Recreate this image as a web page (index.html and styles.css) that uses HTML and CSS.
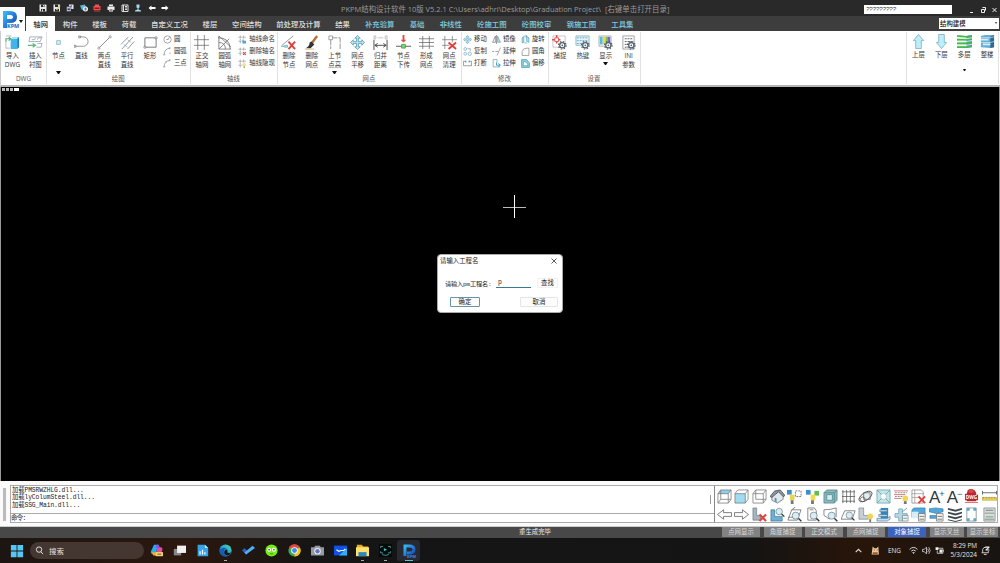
FILE: index.html
```html
<!DOCTYPE html>
<html lang="en">
<head>
    <meta charset="UTF-8">
    <meta name="viewport" content="width=device-width, initial-scale=1.0">
    <title>PKPM</title>
    <link rel="stylesheet" href="styles.css">
</head>
<body>
    <svg class="sprite">
        <defs>
            <linearGradient id="gBlue" x1="0" y1="0" x2="1" y2="1"><stop offset="0" stop-color="#35b4f5"/><stop offset="1" stop-color="#1641b8"/></linearGradient>
            <linearGradient id="gEdge" x1="1" y1="0" x2="0" y2="1"><stop offset="0" stop-color="#5fe08c"/><stop offset=".45" stop-color="#22a9dc"/><stop offset="1" stop-color="#1264c4"/></linearGradient>
        </defs>
        <!-- title bar -->
        <symbol id="save" viewBox="0 0 16 16"><path fill="#e8e8e8" d="M1 1h13l1 1v13H1z"/><path fill="#2a2a2a" d="M4 1h7v5H4zM4 10h8v5H4z"/><path fill="#e8e8e8" d="M8 2h2v3H8zM6 11h2v4H6z"/></symbol>
        <symbol id="saveas" viewBox="0 0 16 16"><path fill="#e8e8e8" d="M1 1h13v14H1z"/><path fill="#2a2a2a" d="M4 1h6v5H4zM4 10h8v5H4z"/><path stroke="#e3c37c" stroke-width="2.5" d="M7 12l7-9"/></symbol>
        <symbol id="copies" viewBox="0 0 16 16"><path fill="#e8e8e8" d="M6 1h9v9H6z"/><path fill="#b9bfd8" stroke="#2a2a2a" d="M1 5h9v10H1z"/><path fill="#33406b" d="M3 9h5v3H3zM9 3h3v2H9z"/></symbol>
        <symbol id="globe" viewBox="0 0 16 16"><path fill="#57b5d8" d="M0 3l9-2 4 5-4 7-6-2z"/><circle cx="11" cy="10" r="5" fill="#eee"/><path stroke="#28739b" stroke-width="1.5" fill="none" d="M8 10h6M11 7v6"/></symbol>
        <symbol id="redbox" viewBox="0 0 16 16"><path fill="#ef5258" d="M4 1h8v3h3v8H1V4h3z"/><path fill="#8c171c" d="M3 7h10v3H3z"/><path fill="#d33a40" d="M2 13h12v2H2z"/></symbol>
        <symbol id="print" viewBox="0 0 16 16"><path fill="#eee" d="M4 1h8v4h3v7h-3v3H4v-3H1V5h3z"/><path fill="#333" d="M4 5h8v1H4zM5 10h6v1H5zM5 12h6v1H5z"/></symbol>
        <symbol id="sheet" viewBox="0 0 16 16"><path fill="none" stroke="#ddd" stroke-width="2" d="M2 2h12v13H2z"/><path stroke="#ddd" stroke-width="2" d="M5 2v13M8 5h4M8 8h4M8 11h4"/></symbol>
        <symbol id="user" viewBox="0 0 16 16"><path fill="#a8dceb" d="M5 1h6v6l-2 1v3l5 2v2H2v-2l5-2V8L5 7z"/></symbol>
        <symbol id="back" viewBox="0 0 16 16"><path fill="#fff" d="M1 8l6-5v3h8v4H7v3z"/></symbol>
        <symbol id="fwd" viewBox="0 0 16 16"><path fill="#fff" d="M15 8L9 3v3H1v4h8v3z"/></symbol>
        <!-- ribbon -->
        <symbol id="import" viewBox="0 0 16 16"><path fill="#42b3ec" d="M6 4h7v11H6z"/><path fill="#a9dcf5" d="M6 4l2-2h7l-2 2z"/><path fill="#1879b5" d="M13 4l2-2v11l-2 2z"/><path fill="none" stroke="#999" stroke-width=".7" d="M1 1h6M1 14h4M1 6v8"/><path fill="none" stroke="#4dae6b" stroke-width="1.2" d="M1 7V4h4M4 2l2 2-2 2"/></symbol>
        <symbol id="insert" viewBox="0 0 16 16"><path fill="none" stroke="#8c9eaa" stroke-width=".8" d="M2 2h13l-2 5H1zM4 5h3l1-2M10 5l1-2h3M9 13h5l1-4h-5"/><path fill="none" stroke="#64b878" stroke-width="1.3" d="M0 11h7M5 9l3 2-3 2"/></symbol>
        <symbol id="node" viewBox="0 0 16 16"><path fill="#d6f0f4" stroke="#74b6bd" stroke-width=".8" d="M6 6h4v4H6z"/></symbol>
        <symbol id="pline" viewBox="0 0 16 16"><path fill="none" stroke="#777" stroke-width=".8" d="M6 2h4a4.800 4.800 0 0 1 0 10H2"/><path fill="#cde6eb" stroke="#666" stroke-width=".6" d="M0 11h2v2H0zM5 1h2v2H5z"/></symbol>
        <symbol id="line2" viewBox="0 0 16 16"><path stroke="#666" stroke-width=".8" d="M2 14L14 2"/><circle cx="14" cy="2" r="1.200" fill="#fff" stroke="#666" stroke-width=".6"/><circle cx="2" cy="14" r="1.200" fill="#fff" stroke="#666" stroke-width=".6"/></symbol>
        <symbol id="para" viewBox="0 0 16 16"><path stroke="#777" stroke-width=".8" d="M1 10L9 2M2 15L14 2M8 15l7-8"/><path stroke="#71adb8" stroke-width=".7" d="M4 10l4 3M8 5l4 3"/></symbol>
        <symbol id="rect" viewBox="0 0 16 16"><path fill="none" stroke="#666" stroke-width=".9" d="M2 3h12v10H2z"/><path fill="#fff" stroke="#666" stroke-width=".6" d="M13 2h2v2h-2zM1 12h2v2H1z"/></symbol>
        <symbol id="circ" viewBox="0 0 16 16"><circle cx="8" cy="8" r="6.500" fill="none" stroke="#666"/><path stroke="#666" d="M8 8l4-4M6 8h4"/></symbol>
        <symbol id="arc" viewBox="0 0 16 16"><path fill="none" stroke="#666" d="M2 14Q2 3 13 2"/><path stroke="#777" d="M0 14h4M12 0v4M11 11h3"/></symbol>
        <symbol id="arc3" viewBox="0 0 16 16"><path fill="none" stroke="#666" d="M2 14Q2 4 13 2"/><path stroke="#777" d="M0 14h4M12 0v4M4 5h3"/></symbol>
        <symbol id="grid" viewBox="0 0 16 16"><path fill="none" stroke="#666" stroke-width=".8" d="M4 0v16M11 0v16M0 5h16M0 11h16"/></symbol>
        <symbol id="fan" viewBox="0 0 16 16"><path fill="none" stroke="#666" stroke-width=".8" d="M2 1v14h13M2 15L13 4M1 3Q14 3 14 15M2 8q7 0 7 7M2 1l13 12"/></symbol>
        <symbol id="axname" viewBox="0 0 16 16"><path fill="none" stroke="#777" stroke-dasharray="4 1" d="M4 1v14M10 1v6M1 4h13M1 11h7"/><path fill="none" stroke="#3b9cc5" stroke-width="2" d="M9 8v6h4v-3H9"/></symbol>
        <symbol id="axdel" viewBox="0 0 16 16"><path fill="none" stroke="#777" stroke-dasharray="4 1" d="M4 1v14M10 1v6M1 4h13M1 11h7"/><path stroke="#e04545" stroke-width="2" d="M9 9l5 5M14 9l-5 5"/></symbol>
        <symbol id="axshow" viewBox="0 0 16 16"><path fill="none" stroke="#777" stroke-dasharray="4 1" d="M4 1v14M10 1v6M1 4h13M1 11h7"/><circle cx="11" cy="10" r="3" fill="#f5e273"/><path stroke="#888" stroke-width="2" d="M11 13v3"/></symbol>
        <symbol id="delnode" viewBox="0 0 16 16"><path stroke="#777" stroke-width=".8" d="M1 11L13 1M0 12h4"/><path fill="#c7edf2" stroke="#4cb1bf" stroke-width=".8" d="M4 11h3v2H4z"/><path stroke="#de3f3b" stroke-width="2" d="M8 7l7 8M15 7l-7 8"/></symbol>
        <symbol id="brush" viewBox="0 0 16 16"><path stroke="#b76b35" stroke-width="2.500" d="M14 1L8 9"/><path fill="#333" d="M8 7l3 3-4 4H2q4-2 4-6z"/><path stroke="#d8b86b" d="M1 15h10"/></symbol>
        <symbol id="height" viewBox="0 0 16 16"><path fill="none" stroke="#777" stroke-width=".8" stroke-dasharray="7 1" d="M4 4v11M4 3h10v12"/><path fill="#fff" stroke="#777" stroke-width=".7" d="M2 1h4v4H2z"/></symbol>
        <symbol id="move" viewBox="0 0 16 16"><path fill="#bce2ee" stroke="#4f9ab5" stroke-width=".8" d="M8 .5l3 3H9v3.500h3.500V5l3 3-3 3V9H9v3.500h2l-3 3-3-3h2V9H3.500v2l-3-3 3-3v2H7V3.500H5z"/></symbol>
        <symbol id="dist" viewBox="0 0 16 16"><path fill="none" stroke="#333" stroke-width=".9" d="M1 5v11M15 5v11M2 11h12M5 9l-3 2 3 2M11 9l3 2-3 2"/><path fill="none" stroke="#999" stroke-width=".6" d="M1 1h2v3H1zM13 1h2v3h-2zM5 3h6"/></symbol>
        <symbol id="down" viewBox="0 0 16 16"><path fill="#e44b47" d="M7 0h2v5h2L8 8 5 5h2z"/><path stroke="#555" d="M0 12h16"/><path fill="#75dc75" stroke="#358a3a" stroke-width=".7" d="M6 10h4v4H6z"/></symbol>
        <symbol id="hash" viewBox="0 0 16 16"><path stroke="#666" stroke-width=".8" d="M4 1v14M11 1v14M0 4h16M0 8h16M0 12h16"/></symbol>
        <symbol id="clean" viewBox="0 0 16 16"><path stroke="#777" stroke-width=".8" d="M3 1v14M11 1v7M0 5h16M0 11h8"/><path stroke="#de3f3b" stroke-width="2" d="M7 8l8 7M15 8l-8 7"/></symbol>
        <symbol id="copy" viewBox="0 0 16 16"><g fill="none" stroke="#4995b4"><circle cx="4" cy="3.500" r="2.500"/><circle cx="4" cy="12" r="2.500"/><circle cx="12" cy="12" r="3"/></g><path fill="none" stroke="#777" d="M8 3h5v4"/></symbol>
        <symbol id="break" viewBox="0 0 16 16"><path fill="none" stroke="#555" d="M5 4H1v8h14V4h-4"/><path stroke="#4995b4" stroke-width="2" d="M5 3v3M11 3v3"/></symbol>
        <symbol id="mirror" viewBox="0 0 16 16"><path fill="none" stroke="#555" d="M6 2v11H1zM8 0v16"/><path fill="#b9e2ef" stroke="#438ba5" d="M10 2v11h5z"/></symbol>
        <symbol id="extend" viewBox="0 0 16 16"><path fill="none" stroke="#666" d="M15 1L9 15M0 8h4M6 8h5"/></symbol>
        <symbol id="stretch" viewBox="0 0 16 16"><path fill="none" stroke="#467e96" d="M2 1v13h12M2 1h7v5"/><path fill="none" stroke="#2d94c4" stroke-width="1.500" d="M8 6v5h6M11 8l4 3-4 3"/></symbol>
        <symbol id="rotate" viewBox="0 0 16 16"><path fill="#bce4f0" stroke="#348caf" d="M2 5l3-2v10l-3 1zM10 3l4 2v8l-4-2z"/><path fill="none" stroke="#348caf" d="M5 2h5M8 0l3 2-3 2M6 14h5"/></symbol>
        <symbol id="fillet" viewBox="0 0 16 16"><path fill="none" stroke="#666" d="M2 15V8q1-6 9-6h3v13z"/></symbol>
        <symbol id="offset" viewBox="0 0 16 16"><path fill="#87d7e8" stroke="#337fa0" d="M1 1h9l5 6v8H1z"/><path fill="#fff" stroke="#337fa0" d="M4 5h5l3 4v3H4z"/></symbol>
        <symbol id="gear" viewBox="0 0 16 16"><circle cx="8" cy="8" r="4.500" fill="#fff" stroke="#53616d" stroke-width="2.200"/><circle cx="8" cy="8" r="6.500" fill="none" stroke="#53616d" stroke-width="2" stroke-dasharray="2.550 2.550"/><circle cx="8" cy="8" r="1.500" fill="#53616d"/></symbol>
        <symbol id="snap" viewBox="0 0 16 16"><path fill="none" stroke="#aaa" stroke-width=".7" d="M1 1h13v12H1z"/><path stroke="#dc514c" stroke-width="1.500" d="M5 0v9M0 5h9"/><path fill="#fff" stroke="#dc514c" d="M3 3h4v4H3z"/><use href="#gear" x="6" y="6" width="10" height="10"/></symbol>
        <symbol id="keys" viewBox="0 0 16 16"><path fill="#e5f4fa" stroke="#77a9bd" stroke-width=".8" d="M1 1h14v10H1z"/><path stroke="#66a9c1" stroke-dasharray="2 1" d="M2 3h12M2 6h12M2 9h12"/><use href="#gear" x="6" y="6" width="10" height="10"/></symbol>
        <symbol id="disp" viewBox="0 0 16 16"><path fill="#eee" stroke="#999" stroke-width=".7" d="M1 1h13v11H1z"/><path fill="#4cbfe6" d="M2 2h3v8H2z"/><path fill="#e8db50" d="M5 2h3v8H5z"/><path fill="#82c75b" d="M8 2h2v7H8z"/><path fill="#7864d0" d="M10 2h3v7h-3z"/><use href="#gear" x="6" y="6" width="10" height="10"/></symbol>
        <symbol id="ini" viewBox="0 0 16 16"><path fill="#fff" stroke="#888" stroke-width=".8" d="M2 1h12v14H2z"/><path stroke="#555" stroke-dasharray="2 1" d="M4 4h8M4 7h8M4 10h5M4 13h3"/><use href="#gear" x="6" y="6" width="10" height="10"/></symbol>
        <symbol id="up" viewBox="0 0 16 16"><path fill="#bdeefa" stroke="#75a9b8" stroke-width=".8" d="M8 .5L13.500 7H11v8.500H5V7H2.500z"/></symbol>
        <symbol id="dn" viewBox="0 0 16 16"><path fill="#bdeefa" stroke="#75a9b8" stroke-width=".8" d="M8 15.500L13.500 9H11V.5H5V9H2.500z"/></symbol>
        <symbol id="floors" viewBox="0 0 16 16"><path fill="#c9f0c9" d="M0 1l10 1v13L0 14z"/><path fill="#4b97a3" d="M10 2l6-1v13l-6 1z"/><path stroke="#48b555" stroke-width="1.700" fill="none" d="M0 2l10 1 6-1M0 6h10l6-1M0 10h10l6-1M0 14h10l6-1"/><path stroke="#fff" stroke-width=".8" fill="none" d="M0 4l10 1 6-1M0 8h10l6-1M0 12h10l6-1"/></symbol>
        <symbol id="whole" viewBox="0 0 16 16"><path fill="#64afd9" d="M1 2l4-1h10v13l-4 1-10-1z"/><path fill="#32688f" d="M11 3l4-2v13l-4 1z"/><path fill="#dceef6" d="M1 5h8v2H1zM3 10h8v2H3z"/><path stroke="#fff" stroke-width=".6" fill="none" d="M1 4h10l4-1M1 9h10l4-1"/></symbol>
        <!-- view tools -->
        <symbol id="cubetop" viewBox="0 0 16 16"><path fill="#8fd0ec" d="M1 5l3-4h11l-3 4z"/><path fill="none" stroke="#777" stroke-width=".8" d="M1 5h11v10H1zM1 5l3-4h11v10l-3 4M12 5l3-4M4 1v10h11M1 15l3-4"/></symbol>
        <symbol id="cubefront" viewBox="0 0 16 16"><path fill="#9fdcf2" d="M1 5h11v10H1z"/><path fill="none" stroke="#777" stroke-width=".8" d="M1 5h11v10H1zM1 5l3-4h11v10l-3 4M12 5l3-4"/></symbol>
        <symbol id="cube" viewBox="0 0 16 16"><path fill="none" stroke="#777" stroke-width=".8" d="M1 5h11v10H1zM1 5l3-4h11v10l-3 4M12 5l3-4M4 1v10h11"/></symbol>
        <symbol id="home" viewBox="0 0 16 16"><path fill="#e2e9ec" stroke="#555" stroke-width=".7" d="M2 7v5l6 3 6-4V6L10 2z"/><path fill="#8799a5" stroke="#333" stroke-width=".7" d="M0 8l5-6 6-1 5 6-2 1-5-5-7 6z"/><path fill="#4f91c2" d="M5 9l2 1v4l-2-1z"/></symbol>
        <symbol id="bulbs" viewBox="0 0 16 16"><path fill="#388ed1" d="M0 1h5v5H0z"/><path fill="#e9d54f" d="M3 6h5v6H3z"/><path fill="none" stroke="#555" stroke-width=".8" stroke-dasharray="2 1" d="M9 2h6v6H9z"/><path stroke="#777" stroke-width="3" d="M5.500 12v4"/></symbol>
        <symbol id="bulbg" viewBox="0 0 16 16"><path fill="#388ed1" d="M1 1h5v5H1z"/><path fill="#60bb52" d="M10 2h5v5h-5z"/><path fill="#f0db4d" d="M6 6h5v6H6z"/><path stroke="#777" stroke-width="3" d="M8 12v4"/></symbol>
        <symbol id="frame3d" viewBox="0 0 16 16"><path fill="#8cb9bd" stroke="#4f858c" stroke-width=".8" d="M1 4l3-3h11v11l-3 3H1z"/><path fill="#d8edef" stroke="#4f858c" stroke-width=".8" d="M4 6h6v6H4z"/><path fill="none" stroke="#4f858c" stroke-width=".8" d="M1 4h11v11M12 4l3-3"/></symbol>
        <symbol id="frame" viewBox="0 0 16 16"><path fill="none" stroke="#555" stroke-width=".8" d="M1 3h14M1 8h14M1 13h14M2 1v14M6 1v14M10 1v14M14 1v14"/></symbol>
        <symbol id="orbit" viewBox="0 0 16 16"><path fill="#e2edf1" stroke="#666" stroke-width=".8" d="M6 4h7v7H6z"/><ellipse cx="8" cy="8" rx="8" ry="4" transform="rotate(-35 8 8)" fill="none" stroke="#444" stroke-width=".9"/><circle cx="5" cy="11" r="2.500" fill="none" stroke="#555" stroke-width=".8"/></symbol>
        <symbol id="extent" viewBox="0 0 16 16"><path fill="#c5e6e7" stroke="#66a0a7" stroke-width=".8" d="M1 1h14v14H1z"/><path fill="#fff" stroke="#8ab7bc" stroke-width=".5" d="M5 5h6v6H5z"/><path stroke="#66a0a7" stroke-width=".8" d="M1 1l5 5M15 1l-5 5M1 15l5-5M15 15l-5-5"/></symbol>
        <symbol id="listbulb" viewBox="0 0 16 16"><path stroke="#c86a62" stroke-width=".9" d="M0 2h15M0 6h12M0 10h8"/><path stroke="#777" stroke-width=".9" stroke-dasharray="2 1" d="M1 4h13M1 8h8"/><circle cx="12" cy="10" r="3" fill="#efd655"/><path stroke="#777" stroke-width="3" d="M12 13v3"/></symbol>
        <symbol id="listdel" viewBox="0 0 16 16"><path fill="none" stroke="#888" stroke-width=".8" d="M1 1h10l2 2v12H1z"/><path stroke="#999" stroke-width=".8" d="M1 5h13M1 9h8M4 1v14"/><path stroke="#df4340" stroke-width="2" d="M8 8l7 7M15 8l-7 7"/></symbol>
        <symbol id="ruler" viewBox="0 0 16 16"><path fill="none" stroke="#555" stroke-width=".9" d="M0 4h16M.5 2v4M15.500 2v4"/><path fill="#ead05e" stroke="#c5ac45" stroke-width=".7" d="M0 9h16v3H0z"/><path stroke="#7c6c2c" stroke-dasharray="1 2" d="M1 9.500h15"/></symbol>
        <symbol id="lefta" viewBox="0 0 16 16"><path fill="#fff" stroke="#555" stroke-width=".8" d="M.5 8L7 3v3h8.500v4H7v3z"/></symbol>
        <symbol id="righta" viewBox="0 0 16 16"><path fill="#fff" stroke="#555" stroke-width=".8" d="M15.500 8L9 3v3H.5v4H9v3z"/></symbol>
        <symbol id="ldel" viewBox="0 0 16 16"><path fill="#a5b5c0" stroke="#687983" stroke-width=".7" d="M1 1h4v8h4v5H1z"/><path stroke="#df4340" stroke-width="2.300" d="M8 8l7 7M15 8l-7 7"/></symbol>
        <symbol id="lens" viewBox="0 0 16 16"><path stroke="#333" stroke-width="2" d="M10 10l5 5"/><circle cx="7" cy="7" r="5" fill="#dcecf0" stroke="#5f7d87"/></symbol>
        <symbol id="lzoom" viewBox="0 0 16 16"><path fill="#6eb0d3" stroke="#356d8e" stroke-width=".7" d="M1 3h4v7h8v5H1z"/><use href="#lens" x="5" width="11" height="11"/></symbol>
        <symbol id="zoomw" viewBox="0 0 16 16"><path fill="none" stroke="#666" stroke-width=".8" d="M1 14l4-11h10l-4 11zM1 11h7M5 3l4-3"/><use href="#lens" x="4" y="4" width="12" height="12"/></symbol>
        <symbol id="zooma" viewBox="0 0 16 16"><path fill="none" stroke="#666" stroke-width=".8" d="M3 1h7l2 3v10H3zM5 3h4"/><use href="#lens" x="4" y="4" width="12" height="12"/></symbol>
        <symbol id="zoomp" viewBox="0 0 16 16"><path fill="none" stroke="#666" stroke-width=".8" d="M1 3q7 0 13-2v10M1 3v6l6 4"/><use href="#lens" x="4" y="4" width="12" height="12"/></symbol>
        <symbol id="zoome" viewBox="0 0 16 16"><path fill="none" stroke="#666" stroke-width=".8" d="M0 13L4 4h11l-3 9z"/><use href="#lens" x="4" y="4" width="11" height="11"/></symbol>
        <symbol id="lbulb" viewBox="0 0 16 16"><path fill="#c8d0d4" stroke="#71818b" stroke-width=".7" d="M1 1h5v8h5v4H1z"/><circle cx="13" cy="10" r="3" fill="#efd655"/><path stroke="#777" stroke-width="2" d="M13 13v3"/></symbol>
        <symbol id="column" viewBox="0 0 16 16"><path fill="#2e86c8" d="M5 1h8v12H5z"/><path fill="#bcdff5" stroke="#476678" stroke-width=".6" d="M4 3h8v2H4zM3 8h9v2H3zM1 12h11l3-2v3l-3 2H1z"/></symbol>
        <symbol id="joint" viewBox="0 0 16 16"><path fill="#b5d8e7" stroke="#6897ad" stroke-width=".7" d="M1 7h4V2h4v5h5v4H9v4H5v-4H1z"/><path fill="#edf5f7" stroke="#777" stroke-width=".7" d="M9 9h6v6H9z"/><path stroke="#358a9f" stroke-width=".8" d="M9 5l5-4M10 12h4"/></symbol>
        <symbol id="winblue" viewBox="0 0 16 16"><path fill="#4fa8dc" stroke="#38799e" stroke-width=".7" d="M1 3l2-2h12v10H1z"/><path fill="#d6edf7" d="M1 5h7v7H1z"/><path fill="#f4f4ee" stroke="#666" stroke-width=".7" d="M8 7h7v8H8z"/><path stroke="#777" d="M9 10h5M9 13h5"/></symbol>
        <symbol id="building" viewBox="0 0 16 16"><path fill="#4fa8dc" stroke="#38799e" stroke-width=".7" d="M0 2l7-1 8 1v3l-7 2-8-2zM1 9h8v3H1z"/><path fill="#f4f4ee" stroke="#666" stroke-width=".7" d="M8 7h7v8H8z"/><path stroke="#777" d="M9 10h5M9 13h5"/></symbol>
        <symbol id="layers" viewBox="0 0 16 16"><path fill="#3e474b" d="M1 1l8 2 7-2v2L9 5 1 3zM1 5l8 2 7-2v2L9 9 1 7zM1 9l8 2 7-2v2l-7 2-8-2zM1 13l8 2 7-2v1l-7 2-8-2z"/></symbol>
        <symbol id="corners" viewBox="0 0 16 16"><path fill="#fff" stroke="#789" stroke-width=".8" d="M3 1h10v14H3z"/><path fill="#58a8c8" d="M3 1h3v3H3zM10 1h3v3h-3zM3 12h3v3H3zM10 12h3v3h-3z"/></symbol>
        <symbol id="report" viewBox="0 0 16 16"><path fill="#d7ddda" stroke="#888" stroke-width=".8" d="M2 1h12v14H2z"/><path fill="#7a8580" d="M4 3h8v1H4zM3 6h10v1H3z"/><path fill="#5aa672" d="M4 10h8v1H4z"/><path stroke="#777" stroke-width=".8" d="M3 13h10"/></symbol>
        <!-- taskbar -->
        <symbol id="win" viewBox="0 0 16 16"><path fill="#55c6f4" d="M1 1h6.500v6.500H1zM8.500 1H15v6.500H8.500zM1 8.500h6.500V15H1zM8.500 8.500H15V15H8.500z"/></symbol>
        <symbol id="copilot" viewBox="0 0 16 16"><path fill="#1eb0ef" d="M5 1h5L7 12H2Q0 11 2 7z"/><path fill="#e64c9c" d="M9 4h4q3 0 2 4l-2 5H7z"/><path fill="#f1ab38" d="M2 10h7l-1 4H4z"/><path fill="#8a53e8" d="M8 1h3l1 4H7z"/><path fill="#fbd36b" d="M7 10h9v5H7z"/><path stroke="#533" d="M9 12.500h5"/></symbol>
        <symbol id="task" viewBox="0 0 16 16"><path fill="#888" d="M1 6h9v8H1z"/><path fill="#f0f0f0" d="M5 2h11v9H5z"/></symbol>
        <symbol id="chart" viewBox="0 0 16 16"><path fill="#36a3e6" d="M2 1h9l4 4v10H2z"/><path fill="#b8e6ff" d="M11 1l4 4h-4z"/><path stroke="#fff" stroke-width="1.500" d="M5 9v4M8 7v6M11 10v3"/></symbol>
        <symbol id="edge" viewBox="0 0 16 16"><circle cx="8" cy="8" r="7.500" fill="url(#gEdge)"/><path fill="#171514" d="M7 8q1-2 3-1 1 1 0 3 2 2 5 0-2 4-5 4-5-1-3-6z"/><path fill="#145caf" d="M1 7q5-4 8-1-4 0-3 5 1 3 4 4-7 1-9-5z"/></symbol>
        <symbol id="todo" viewBox="0 0 16 16"><path fill="#2564bd" d="M3 5l5 5-3 3-5-5z"/><path fill="#51adf5" d="M5 13l-2-2.500L13 2l3 3z"/></symbol>
        <symbol id="frog" viewBox="0 0 16 16"><circle cx="8" cy="8" r="7.500" fill="#77ed16"/><circle cx="5" cy="7" r="2.500" fill="#fff"/><circle cx="11" cy="7" r="2.500" fill="#fff"/><circle cx="5" cy="7" r="1" fill="#253d0b"/><circle cx="11" cy="7" r="1" fill="#253d0b"/><path stroke="#427e13" d="M6 12h4"/></symbol>
        <symbol id="chrome" viewBox="0 0 16 16"><circle cx="8" cy="8" r="7.500" fill="#37a853"/><path fill="#ea4637" d="M8 8L1.500 4.200A7.500 7.500 0 0 1 14.500 4.200H8z"/><path fill="#fbc117" d="M8 8l6.500-3.800A7.500 7.500 0 0 1 8 15.500z"/><circle cx="8" cy="8" r="4" fill="#fff"/><circle cx="8" cy="8" r="3" fill="#4385ee"/></symbol>
        <symbol id="cam" viewBox="0 0 16 16"><path fill="#969ba3" d="M5 2h6l1 2h4v10H0V4h4z"/><circle cx="8" cy="9" r="4" fill="#eee"/><circle cx="8" cy="9" r="2.700" fill="#6378c3"/></symbol>
        <symbol id="wave" viewBox="0 0 16 16"><path fill="#1250e8" d="M0 2h16v12H0z"/><path fill="#28b2f5" d="M16 5v9H6z"/><path fill="none" stroke="#fff" stroke-width="1.400" d="M3 7l3 2 3-1 3 0 2-2"/></symbol>
        <symbol id="folder" viewBox="0 0 16 16"><path fill="#e9aa29" d="M1 1h6l2 2h6v4H1z"/><path fill="#ffe16f" d="M0 4h16v11H0z"/><path fill="#2989bd" d="M3 10h10v5H3z"/></symbol>
        <symbol id="rec" viewBox="0 0 16 16"><path fill="#05090a" d="M0 0h16v16H0z"/><path fill="none" stroke="#48b8b1" d="M2 5V3h3M11 3h3v2M2 9v2h3M11 11h3V9M4 13q4 2 8 0"/><path fill="#48b8b1" d="M6 5l4 2-4 2z"/></symbol>
        <symbol id="cat" viewBox="0 0 16 16"><path fill="#e9ca9d" d="M3 1l3 3h4l3-3 1 14H1z"/><path fill="#a45735" d="M5 6h2v2H5zM10 6h2v2h-2zM3 11h9v3H3z"/></symbol>
        <symbol id="wifi" viewBox="0 0 16 16"><path fill="none" stroke="#ddd" stroke-width="1.700" d="M1 6q7-7 14 0M4 9q4-4 8 0"/><path fill="#ddd" d="M5.500 11h5L8 14z"/></symbol>
        <symbol id="vol" viewBox="0 0 16 16"><path fill="none" stroke="#ddd" stroke-width="1.400" d="M1 6h3l4-4v12l-4-4H1zM10 5q3 3 0 6M12 2q5 6 0 12"/></symbol>
        <symbol id="batt" viewBox="0 0 16 16"><path fill="none" stroke="#ddd" stroke-width="1.400" d="M5 4h9v9H4V8M15 7v3"/><path fill="#eee" d="M8 6h5v6H8zM1 2h5v5H1z"/></symbol>
        <symbol id="bell" viewBox="0 0 16 16"><path fill="none" stroke="#ddd" stroke-width="1.600" d="M3 12V6q1-4 6-4M13 9v3H1M5 15h5"/><path fill="#eee" d="M8 1h7v2l-4 3h4v2H8V6l4-3H8z"/></symbol>
    </svg>

    <header>
        <div class="logo">
            <svg viewBox="0 0 25 24"><path fill="none" stroke="url(#gBlue)" stroke-width="4" d="M5 21V6h5q5 0 5 4t-5 4H7"/><text x="7" y="20.500" font-size="5.500" font-weight="700" fill="#1961b8">KPM</text><path fill="#111" d="M19 13h4l-2 3z"/></svg>
        </div>
        <div class="bars">
            <div class="titlebar">
                <div class="quick">
                    <svg><use href="#save"/></svg><svg><use href="#saveas"/></svg><svg><use href="#copies"/></svg><svg><use href="#globe"/></svg><svg><use href="#redbox"/></svg><svg><use href="#print"/></svg><svg><use href="#sheet"/></svg><svg><use href="#user"/></svg><svg><use href="#back"/></svg><svg><use href="#fwd"/></svg>
                </div>
                <div class="title">PKPM结构设计软件 10版 V5.2.1 C:\Users\adhri\Desktop\Graduation Project\&nbsp; [右键单击打开目录]</div>
                <div class="find">?????????</div>
                <svg class="winbtns" viewBox="0 0 30 10"><path fill="none" stroke="#eee" d="M1 7.500h3M12.500 4.500h3v3h-3zM13.500 2.500h3v3M23.500 3l4 4M27.500 3l-4 4"/></svg>
            </div>
            <nav>
                <a class="active">轴网</a><a>构件</a><a>楼板</a><a>荷载</a><a>自定义工况</a><a>楼层</a><a>空间结构</a><a>前处理及计算</a><a>结果</a><a class="cy">补充验算</a><a class="cy">基础</a><a class="cy">非线性</a><a class="cy">砼施工图</a><a class="cy">砼图校审</a><a class="cy">钢施工图</a><a class="cy">工具集</a>
                <div class="mode">结构建模<i></i></div>
            </nav>
        </div>
    </header>

    <div class="ribbon">
        <div class="group g-dwg">
            <div class="tools">
                <div class="big"><svg><use href="#import"/></svg>导入<br>DWG</div>
                <div class="big"><svg><use href="#insert"/></svg>插入<br>衬图</div>
            </div>
            <div class="name">DWG</div>
        </div>
        <div class="group g-draw">
            <div class="tools">
                <div class="big"><svg><use href="#node"/></svg>节点<i class="gap"></i></div>
                <div class="big"><svg><use href="#pline"/></svg>直线</div>
                <div class="big"><svg><use href="#line2"/></svg>两点<br>直线</div>
                <div class="big"><svg><use href="#para"/></svg>平行<br>直线</div>
                <div class="big"><svg><use href="#rect"/></svg>矩形</div>
                <div class="col">
                    <div><svg><use href="#circ"/></svg>圆</div>
                    <div><svg><use href="#arc"/></svg>圆弧</div>
                    <div><svg><use href="#arc3"/></svg>三点</div>
                </div>
            </div>
            <div class="name">绘图</div>
        </div>
        <div class="group g-axis">
            <div class="tools">
                <div class="big"><svg><use href="#grid"/></svg>正交<br>轴网</div>
                <div class="big"><svg><use href="#fan"/></svg>圆弧<br>轴网</div>
                <div class="col">
                    <div><svg><use href="#axname"/></svg>轴线命名</div>
                    <div><svg><use href="#axdel"/></svg>删除轴名</div>
                    <div><svg><use href="#axshow"/></svg>轴线隐现</div>
                </div>
            </div>
            <div class="name">轴线</div>
        </div>
        <div class="group g-node">
            <div class="tools">
                <div class="big"><svg><use href="#delnode"/></svg>删除<br>节点</div>
                <div class="big"><svg><use href="#brush"/></svg>删除<br>网点</div>
                <div class="big"><svg><use href="#height"/></svg>上节<br>点高<i></i></div>
                <div class="big"><svg><use href="#move"/></svg>网点<br>平移</div>
                <div class="big"><svg><use href="#dist"/></svg>归并<br>距离</div>
                <div class="big"><svg><use href="#down"/></svg>节点<br>下传</div>
                <div class="big"><svg><use href="#hash"/></svg>形成<br>网点</div>
                <div class="big"><svg><use href="#clean"/></svg>网点<br>清理</div>
            </div>
            <div class="name">网点</div>
        </div>
        <div class="group g-edit">
            <div class="tools">
                <div class="col">
                    <div><svg><use href="#move"/></svg>移动</div>
                    <div><svg><use href="#copy"/></svg>复制</div>
                    <div><svg><use href="#break"/></svg>打断</div>
                </div>
                <div class="col">
                    <div><svg><use href="#mirror"/></svg>镜像</div>
                    <div><svg><use href="#extend"/></svg>延伸</div>
                    <div><svg><use href="#stretch"/></svg>拉伸</div>
                </div>
                <div class="col">
                    <div><svg><use href="#rotate"/></svg>旋转</div>
                    <div><svg><use href="#fillet"/></svg>圆角</div>
                    <div><svg><use href="#offset"/></svg>偏移</div>
                </div>
            </div>
            <div class="name">修改</div>
        </div>
        <div class="group g-set">
            <div class="tools">
                <div class="big"><svg><use href="#snap"/></svg>捕捉</div>
                <div class="big"><svg><use href="#keys"/></svg>热键</div>
                <div class="big"><svg><use href="#disp"/></svg>显示<i></i></div>
                <div class="big"><svg><use href="#ini"/></svg>INI<br>参数</div>
            </div>
            <div class="name">设置</div>
        </div>
        <div class="group g-floor">
            <div class="tools">
                <div class="big"><svg><use href="#up"/></svg>上层</div>
                <div class="big"><svg><use href="#dn"/></svg>下层</div>
                <div class="big"><svg><use href="#floors"/></svg>多层<i class="tiny"></i></div>
                <div class="big"><svg><use href="#whole"/></svg>整楼</div>
            </div>
        </div>
    </div>

    <main>
        <div class="chips"><i></i><i></i><i></i><i></i></div>
        <div class="cross"></div>
        <div class="dialog">
            <div class="dlg-head">请输入工程名<svg viewBox="0 0 6 6"><path stroke="#333" stroke-width=".8" d="M.5.5l5 5M5.500.5l-5 5"/></svg></div>
            <div class="dlg-row"><span>请输入pm工程名:</span><div class="field">p</div><button>查找</button></div>
            <div class="dlg-foot"><button class="ok">确定</button><button class="cancel">取消</button></div>
        </div>
    </main>

    <section class="command">
        <div class="grip"></div>
        <div class="console">
            <div class="log">加载PMSRWZHLG.dll...<br>加载lyColumSteel.dll...<br>加载SSG_Main.dll...<b></b></div>
            <div class="prompt">命令:</div>
        </div>
        <div class="views">
            <svg><use href="#cubetop"/></svg><svg><use href="#cubefront"/></svg><svg><use href="#cube"/></svg><svg><use href="#home"/></svg><svg><use href="#bulbs"/></svg><svg><use href="#bulbg"/></svg><svg><use href="#frame3d"/></svg><svg><use href="#frame"/></svg><svg><use href="#orbit"/></svg><svg><use href="#extent"/></svg><svg><use href="#listbulb"/></svg><svg><use href="#listdel"/></svg><span>A<sup>+</sup></span><span>A<sup>−</sup></span>
            <svg viewBox="0 0 16 16"><path fill="#bd262d" d="M4 1h7l2 3v2h2v6h-2v1H3v-1H1V5h2z"/><path fill="#d64a4b" d="M5 0h5v4H5zM1 14h14v1H1z"/><text x="8" y="10.500" text-anchor="middle" fill="#fff" font-size="5" font-weight="700">DWG</text></svg>
            <svg><use href="#ruler"/></svg>
            <svg><use href="#lefta"/></svg><svg><use href="#righta"/></svg><svg><use href="#ldel"/></svg><svg><use href="#lzoom"/></svg><svg><use href="#zoomw"/></svg><svg><use href="#zooma"/></svg><svg><use href="#zoomp"/></svg><svg><use href="#zoome"/></svg><svg><use href="#lbulb"/></svg><svg><use href="#column"/></svg><svg><use href="#joint"/></svg><svg><use href="#winblue"/></svg><svg><use href="#building"/></svg><svg><use href="#layers"/></svg><svg><use href="#corners"/></svg><svg><use href="#report"/></svg>
        </div>
    </section>

    <div class="status">
        <div class="msg">重生成完毕</div>
        <div class="toggles"><span>点网显示</span><span>角度捕捉</span><span>正交模式</span><span>点网捕捉</span><span class="on">对象捕捉</span><span class="s1">显示叉丝</span><span class="s2">显示坐标</span></div>
    </div>

    <footer>
        <svg class="start"><use href="#win"/></svg>
        <div class="search"><svg viewBox="0 0 10 10"><circle cx="4.500" cy="4" r="3" fill="none" stroke="#eee"/><path stroke="#eee" d="M6.500 6.500L9 9"/></svg>搜索</div>
        <div class="apps">
            <div><svg><use href="#copilot"/></svg></div><div><svg><use href="#task"/></svg></div><div><svg><use href="#chart"/></svg></div><div class="run"><svg><use href="#edge"/></svg></div><div><svg><use href="#todo"/></svg></div><div><svg><use href="#frog"/></svg></div><div><svg><use href="#chrome"/></svg></div><div><svg><use href="#cam"/></svg></div><div><svg><use href="#wave"/></svg></div><div class="run"><svg><use href="#folder"/></svg></div><div class="run"><svg><use href="#rec"/></svg></div><div class="run current"><svg viewBox="0 0 16 16"><path fill="none" stroke="url(#gBlue)" stroke-width="3" d="M4 13V3h4q5 0 5 3.500T8 10H6"/><text x="6" y="14.500" font-size="4" font-weight="700" fill="#4785dd">KPM</text></svg></div>
        </div>
        <div class="tray">
            <svg class="chev" viewBox="0 0 8 8"><path fill="none" stroke="#ddd" d="M1.500 5.500L4 3l2.500 2.500"/></svg>
            <svg class="pet"><use href="#cat"/></svg>
            <span class="lang">ENG</span>
            <svg><use href="#wifi"/></svg><svg><use href="#vol"/></svg><svg><use href="#batt"/></svg>
            <div class="clock">8:29 PM<br>5/3/2024</div>
            <svg><use href="#bell"/></svg>
        </div>
    </footer>
</body>
</html>
```
FILE: styles.css
```css
* {
    box-sizing: border-box;
}
body {
    margin: 0;
    width: 1000px;
    height: 563px;
    overflow: hidden;
    display: flex;
    flex-direction: column;
    background: #fff;
    font-family: "Open Sans", "Noto Sans CJK SC", sans-serif;
    font-size: 6.4px;
    color: #333;
}
svg {
    display: block;
    flex: none;
}
.sprite {
    position: absolute;
    width: 0;
    height: 0;
}

/* title and tabs */
header {
    height: 31px;
    display: flex;
    background: linear-gradient(#292929 16px, #3d3d3d 16px);
}
.logo {
    width: 25px;
    height: 24px;
    margin: 7px 1px 0 0;
    background: #fff;
}
.logo svg {
    width: 25px;
    height: 24px;
}
.bars {
    flex: 1;
}
.titlebar {
    height: 16px;
    display: flex;
    align-items: center;
}
.quick {
    display: flex;
    gap: 5.6px;
    margin-left: 13px;
    width: 302px;
}
.quick svg {
    width: 8px;
    height: 8px;
}
.title {
    width: 523px;
    font-size: 7.45px;
    white-space: nowrap;
    color: #9b9b9b;
}
.find {
    width: 88px;
    height: 9px;
    margin-top: 3px;
    padding-left: 2px;
    background: #fff;
    font: italic 6px/9px "Liberation Sans", sans-serif;
    color: #222;
}
.winbtns {
    width: 30px;
    height: 10px;
    margin: 4px 0 0 17px;
}
nav {
    height: 15px;
    display: flex;
    font-size: 7.4px;
    line-height: 16px;
    font-weight: 500;
    color: #ddd;
}
nav a {
    padding: 0 7.32px;
    white-space: nowrap;
}
nav .active {
    background: #fff;
    color: #333;
}
nav .cy {
    padding: 0 7.6px;
    color: #7fcbe2;
}
.mode {
    width: 60px;
    height: 11px;
    margin: 2px 1px 0 auto;
    padding: 0 2px 0 1px;
    display: flex;
    justify-content: space-between;
    align-items: center;
    background: #fff;
    font-size: 6.4px;
    line-height: 11px;
    color: #222;
}
.mode i {
    border: 1.5px solid transparent;
    border-top: 2px solid #333;
}

/* ribbon */
.ribbon {
    height: 56px;
    display: flex;
    border-bottom: 2px solid #b5b5b5;
    border-left: 1px solid #ccc;
}
.group {
    height: 52px;
    border-right: 1px solid #e1e1e1;
    margin-top: 1px;
}
.g-dwg { width: 46px; }
.g-draw { width: 143.5px; }
.g-axis { width: 87px; }
.g-node { width: 184px; }
.g-edit { width: 87px; }
.g-set { width: 92px; }
.g-floor { width: 93px; margin-left: auto; margin-right: 1px; border-left: 1px solid #e1e1e1; }
.tools {
    height: 41px;
    display: flex;
}
.big {
    width: 22.9px;
    flex: none;
    padding-top: 3px;
    text-align: center;
    line-height: 9px;
    white-space: nowrap;
}
.big svg {
    width: 15px;
    height: 15px;
    margin: 0 auto .5px;
}
.big i {
    display: block;
    width: 5px;
    margin: 2px auto 0;
    border: 2.5px solid transparent;
    border-top: 3px solid #111;
}
.big .gap {
    margin-top: 11px;
}
.big .tiny {
    width: 3px;
    margin-top: 10px;
    border: 1.5px solid transparent;
    border-top: 2px solid #111;
}
.g-floor .big {
    padding-top: 2px;
}
.col {
    padding-top: 1px;
    line-height: 12px;
    white-space: nowrap;
}
.col div {
    display: flex;
    align-items: center;
    gap: 2px;
    height: 12px;
}
.col svg {
    width: 9px;
    height: 9px;
}
.g-draw .col {
    padding-left: 1.5px;
}
.g-axis .col {
    padding-left: 2px;
}
.g-edit .tools {
    padding-left: 1.5px;
    gap: 5.2px;
}
.name {
    text-align: center;
    line-height: 11px;
    color: #555;
}

/* drawing canvas */
main {
    height: 394px;
    position: relative;
    background: #000;
    border-left: 1px solid #999;
    border-right: 1px solid #888;
}
.chips {
    display: flex;
    gap: 1px;
    padding: 1px;
}
.chips i {
    width: 3px;
    height: 3px;
    background: #bbb;
}
.chips i:last-child {
    width: 5px;
    background: #fff;
}
.cross {
    position: absolute;
    left: 502px;
    top: 108px;
    width: 23px;
    height: 23px;
    background: linear-gradient(#fff, #fff) 11px 0 / 1px 23px no-repeat, linear-gradient(#bbb, #bbb) 0 12px / 23px 1px no-repeat;
}
.dialog {
    position: absolute;
    left: 436px;
    top: 167px;
    width: 126px;
    height: 59px;
    border: 1px solid #aaa;
    border-radius: 4px;
    background: #fff;
    color: #222;
}
.dlg-head {
    height: 12px;
    display: flex;
    justify-content: space-between;
    align-items: center;
    padding: 0 5px 0 2px;
    line-height: 12px;
}
.dlg-head svg {
    width: 6px;
    height: 6px;
}
.dlg-row {
    height: 12px;
    margin-top: 10px;
    padding: 0 4px 0 7px;
    display: flex;
    align-items: center;
    justify-content: space-between;
    white-space: nowrap;
}
.dlg-row span {
    width: 48px;
    font-family: "Liberation Mono", "Noto Sans CJK SC", monospace;
    font-size: 6.2px;
    letter-spacing: -.2px;
}
.field {
    width: 35px;
    height: 9px;
    margin-right: 3px;
    padding-left: 2px;
    border-bottom: 1px solid #327b93;
    font: 6.4px/8px "Liberation Mono", monospace;
}
.dialog button {
    height: 10px;
    padding: 0;
    border: 1px solid #e5e5e5;
    border-radius: 1px;
    background: #fdfdfd;
    font: inherit;
    line-height: 8px;
    color: #222;
}
.dlg-row button {
    width: 21px;
    border-color: #f1f1f1;
}
.dlg-foot {
    display: flex;
    justify-content: space-between;
    padding: 8px 4px 0 12px;
}
.dialog .ok {
    width: 30px;
    border-color: #6795a8;
}
.dialog .cancel {
    width: 38px;
}

/* command line */
.command {
    height: 46px;
    display: flex;
    padding: 4px 2px 3px 3px;
    background: #fbfbfb;
    border-bottom: 1px solid #ccc;
}
.grip {
    width: 3px;
    height: 33px;
    margin: 3px 4px 0 0;
    background: #bbb;
}
.console {
    width: 705px;
    border: 1px solid #aaa;
    border-right-color: #888;
    background: #fff;
    font: 6.3px/7.4px "Liberation Mono", "Noto Sans CJK SC", monospace;
    letter-spacing: -.07px;
    color: #222;
}
.log {
    height: 28px;
    padding: 1px 0 0 1px;
    position: relative;
    border-bottom: 1px solid #aaa;
}
.log b {
    position: absolute;
    right: 3px;
    top: 9px;
    width: 1px;
    height: 9px;
    background: #999;
}
.prompt {
    line-height: 10px;
    letter-spacing: -.5px;
}
.views {
    flex: 1;
    display: grid;
    grid-template-columns: repeat(16, 15px);
    grid-template-rows: 15px 15px;
    column-gap: 2.7px;
    row-gap: 3px;
    padding: 3px 0 0 2px;
    border: 1px solid #aaa;
    border-left: none;
    background: #fff;
}
.views svg {
    width: 15px;
    height: 15px;
}
.views span {
    font: 17px/17px "Liberation Sans", sans-serif;
    color: #2f3a42;
    white-space: nowrap;
}
.views sup {
    display: inline-block;
    font-size: 9px;
    line-height: 8px;
    margin-left: -1px;
    vertical-align: 6px;
    color: #24506c;
}

/* status bar */
.status {
    height: 11px;
    display: flex;
    background: #484848;
    color: #ddd;
    line-height: 10px;
}
.msg {
    width: 722px;
    padding-left: 519px;
    color: #eee;
}
.toggles {
    display: flex;
    gap: 3.5px;
}
.toggles span {
    width: 38px;
    height: 10px;
    text-align: center;
    background: #828282;
}
.toggles .on {
    background: #3b62bd;
    color: #fff;
}
.toggles .s1 {
    width: 34px;
}
.toggles .s2 {
    width: 31px;
    white-space: nowrap;
}

/* taskbar */
footer {
    height: 25px;
    display: flex;
    align-items: center;
    background: linear-gradient(90deg, #1d1512, #2b180e 18%, #151515 32%, #141414 75%, #281509 86%, #171411);
    color: #e5e5e5;
}
.start {
    width: 14px;
    height: 14px;
    margin: 0 6px 0 10px;
}
.search {
    width: 114px;
    height: 17px;
    margin-right: 1.5px;
    padding-left: 5px;
    display: flex;
    align-items: center;
    gap: 5px;
    border-radius: 9px;
    background: #443731;
    font-size: 7.4px;
}
.search svg {
    width: 9px;
    height: 9px;
}
.apps {
    display: flex;
}
.apps div {
    width: 22.9px;
    height: 21px;
    display: flex;
    align-items: center;
    justify-content: center;
    position: relative;
}
.apps svg {
    width: 13px;
    height: 13px;
}
.apps .run::after {
    content: "";
    position: absolute;
    bottom: 0;
    width: 3px;
    height: 1px;
    background: #aaa;
}
.apps .current {
    background: #272b31;
    border-radius: 3px;
}
.apps .current svg {
    width: 16px;
    height: 16px;
}
.apps .current::after {
    width: 8px;
    background: #4bc6dc;
}
.tray {
    margin: 0 10px 0 auto;
    display: flex;
    align-items: center;
    gap: 4px;
}
.tray svg {
    width: 9px;
    height: 9px;
}
.tray .chev {
    margin-right: 4px;
}
.tray .pet {
    margin-right: 4px;
}
.lang {
    width: 14px;
    margin-right: 3px;
    font-size: 6.4px;
}
.clock {
    width: 29px;
    text-align: right;
    font-size: 6.4px;
    line-height: 8.5px;
    white-space: nowrap;
}
```
